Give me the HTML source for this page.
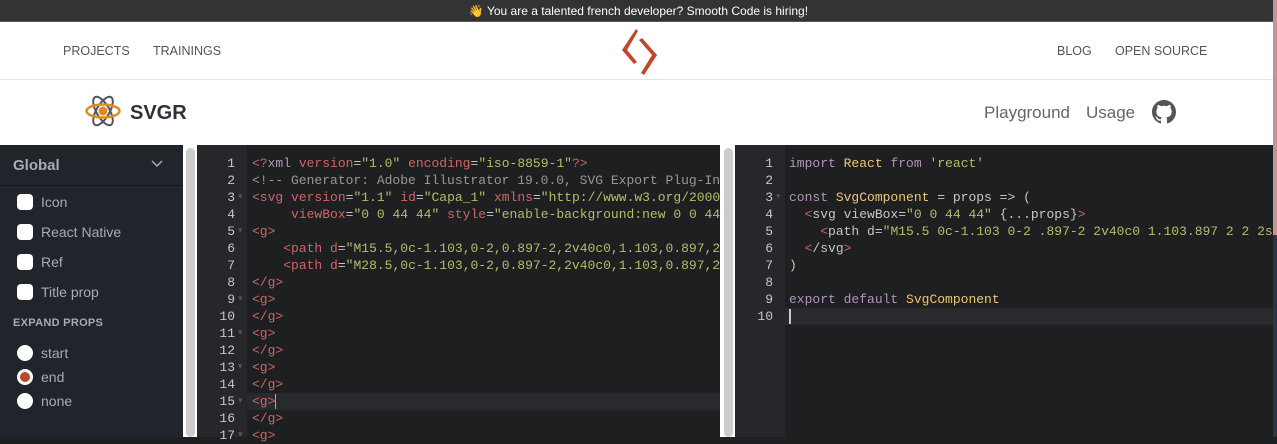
<!DOCTYPE html>
<html><head><meta charset="utf-8"><style>
*{margin:0;padding:0;box-sizing:border-box}
body{width:1277px;height:437px;overflow:hidden;background:#1d1f21;font-family:"Liberation Sans",sans-serif;position:relative}
.abs{position:absolute}
.banner{left:0;top:0;width:1277px;height:22px;background:#333;color:#fff;font-size:12px;line-height:23px;text-align:center;border-bottom:1px solid #555}
.nav{left:0;top:22px;width:1277px;height:58px;background:#fff;border-bottom:1px solid #e2e2e2}
.nav span{position:absolute;top:22px;font-size:12.5px;color:#555}
.hdr{left:0;top:80px;width:1277px;height:65px;background:#fff}
.side{left:0;top:145px;width:183px;height:292px;background:#21242b}
.code{font-family:"Liberation Mono",monospace;font-size:13px;line-height:17px;white-space:pre;color:#c5c8c6}
.ln{color:#c5c8c6;text-align:right}
.t{color:#cc6666}.a{color:#cc6666}.s{color:#b5bd68}.c{color:#969896}.k{color:#b294bb}.y{color:#f0c674}
.cb{position:absolute;left:17px;width:16px;height:16px;border-radius:4px;background:#fff}
.lbl{position:absolute;left:41px;font-size:14px;color:#a8abb0}
.rd{position:absolute;left:17px;width:16px;height:16px;border-radius:50%;background:#fff}
</style></head><body>
<div class="abs banner">👋 You are a talented french developer? Smooth Code is hiring!</div>
<div class="abs nav">
<span style="left:63px">PROJECTS</span><span style="left:153px">TRAININGS</span>
<span style="left:1057px">BLOG</span><span style="left:1115px">OPEN SOURCE</span>
<svg class="abs" style="left:618px;top:5px" width="44" height="50" viewBox="618 27 44 50"><polygon fill="#c0462b" points="636,29 638,31 627,50 637,62 634,64 622,50" /><polygon fill="#c0462b" points="639,40 642,38 657,55 644,75 641,73 652,55"/></svg>
</div>
<div class="abs hdr">
<svg class="abs" style="left:84px;top:14px" width="38" height="34" viewBox="0 0 38 34"><g fill="none" stroke="#555" stroke-width="2"><ellipse cx="19" cy="17" rx="6.5" ry="16" transform="rotate(-30 19 17)"/><ellipse cx="19" cy="17" rx="6.5" ry="16" transform="rotate(30 19 17)"/></g><ellipse cx="19" cy="17" rx="16.5" ry="6.5" fill="none" stroke="#e48a23" stroke-width="2.5"/><circle cx="19" cy="17" r="4.5" fill="#e48a23"/></svg>
<div class="abs" style="left:130px;top:22px;font-size:20px;font-weight:bold;color:#2c323a">SVGR</div>
<div class="abs" style="left:984px;top:23px;font-size:17px;color:#666">Playground</div>
<div class="abs" style="left:1086px;top:23px;font-size:17px;color:#666">Usage</div>
<svg class="abs" style="left:1152px;top:20px" width="24" height="24" viewBox="0 0 16 16"><path fill="#555" d="M8 0C3.58 0 0 3.58 0 8c0 3.540 2.29 6.53 5.47 7.59.4.07.55-.17.55-.38 0-.19-.01-.82-.01-1.49-2.01.37-2.53-.49-2.690-.94-.09-.23-.48-.94-.82-1.13-.28-.15-.68-.52-.01-.53.63-.01 1.08.58 1.23.82.72 1.21 1.870.87 2.33.66.07-.52.28-.87.51-1.07-1.78-.2-3.64-.89-3.64-3.95 0-.87.31-1.59.82-2.15-.08-.2-.36-1.02.08-2.12 0 0 .67-.21 2.2.82.64-.18 1.32-.27 2-.27.68 0 1.36.09 2 .27 1.53-1.04 2.2-.82 2.2-.82.44 1.1.16 1.92.08 2.12.51.56.82 1.27.82 2.15 0 3.07-1.87 3.75-3.65 3.95.29.25.54.73.54 1.48 0 1.07-.01 1.93-.01 2.2 0 .21.15.46.55.38A8.013 8.013 0 0016 8c0-4.42-3.58-8-8-8z"/></svg>
</div>
<div class="abs" style="left:1273px;top:0;width:4px;height:235px;background:#c49393"></div>
<div class="abs" style="left:1273px;top:235px;width:4px;height:202px;background:#2a3545"></div>

<div class="abs side">
<div class="abs" style="left:13px;top:12px;font-size:15px;font-weight:bold;color:#a8abb0">Global</div>
<svg class="abs" style="left:151px;top:15px" width="12" height="8"><path d="M1 1l5 5 5-5" stroke="#a8abb0" stroke-width="1.5" fill="none"/></svg>
<div class="abs" style="left:0;top:40px;width:183px;height:1px;background:#15171b"></div>
<div class="cb" style="top:49px"></div><div class="lbl" style="top:49px">Icon</div>
<div class="cb" style="top:79px"></div><div class="lbl" style="top:79px">React Native</div>
<div class="cb" style="top:109px"></div><div class="lbl" style="top:109px">Ref</div>
<div class="cb" style="top:139px"></div><div class="lbl" style="top:139px">Title prop</div>
<div class="abs" style="left:13px;top:172px;font-size:11px;font-weight:bold;color:#a8abb0;letter-spacing:.3px">EXPAND PROPS</div>
<div class="rd" style="top:200px"></div><div class="lbl" style="top:200px">start</div>
<div class="rd" style="top:224px;background:#c0462b;border:3px solid #fff"></div><div class="lbl" style="top:224px">end</div>
<div class="rd" style="top:248px"></div><div class="lbl" style="top:248px">none</div>
</div>
<div class="abs" style="left:183px;top:145px;width:14px;height:292px;background:#fff"></div>
<div class="abs" style="left:186px;top:148px;width:9px;height:289px;background:#ccc;border-radius:5px"></div>
<div class="abs" style="left:197px;top:145px;width:50px;height:292px;background:#25272b"></div>
<div class="abs" style="left:247px;top:393px;width:473px;height:17px;background:#282a2e"></div>
<div class="abs code ln" style="left:197px;top:155px;width:38px">1
2
3
4
5
6
7
8
9
10
11
12
13
14
15
16
17</div>
<div class="abs code" style="left:238px;top:155px;color:#555;font-size:9px;line-height:17px">

▾

▾



▾

▾

▾

▾

▾</div>
<div class="abs code" style="left:252px;top:155px;width:468px;overflow:hidden"><span class="t">&lt;?</span><span class="k">xml</span> <span class="a">version</span>=<span class="s">"1.0"</span> <span class="a">encoding</span>=<span class="s">"iso-8859-1"</span><span class="t">?&gt;</span>
<span class="c">&lt;!-- Generator: Adobe Illustrator 19.0.0, SVG Export Plug-In . SVG Version</span>
<span class="t">&lt;svg</span> <span class="a">version</span>=<span class="s">"1.1"</span> <span class="a">id</span>=<span class="s">"Capa_1"</span> <span class="a">xmlns</span>=<span class="s">"http://www.w3.org/2000/svg"</span>
     <span class="a">viewBox</span>=<span class="s">"0 0 44 44"</span> <span class="a">style</span>=<span class="s">"enable-background:new 0 0 44 44;"</span>
<span class="t">&lt;g&gt;</span>
    <span class="t">&lt;path</span> <span class="a">d</span>=<span class="s">"M15.5,0c-1.103,0-2,0.897-2,2v40c0,1.103,0.897,2,2,2s2</span>
    <span class="t">&lt;path</span> <span class="a">d</span>=<span class="s">"M28.5,0c-1.103,0-2,0.897-2,2v40c0,1.103,0.897,2,2,2s2</span>
<span class="t">&lt;/g&gt;</span>
<span class="t">&lt;g&gt;</span>
<span class="t">&lt;/g&gt;</span>
<span class="t">&lt;g&gt;</span>
<span class="t">&lt;/g&gt;</span>
<span class="t">&lt;g&gt;</span>
<span class="t">&lt;/g&gt;</span>
<span class="t">&lt;g&gt;</span><span style="border-left:1px solid #aaa"></span>
<span class="t">&lt;/g&gt;</span>
<span class="t">&lt;g&gt;</span></div>
<div class="abs" style="left:720px;top:145px;width:15px;height:292px;background:#fff"></div>
<div class="abs" style="left:724px;top:148px;width:9px;height:289px;background:#ccc;border-radius:5px"></div>
<div class="abs" style="left:735px;top:145px;width:50px;height:292px;background:#25272b"></div>
<div class="abs" style="left:785px;top:308px;width:488px;height:17px;background:#282a2e"></div>
<div class="abs code ln" style="left:735px;top:155px;width:38px">1
2
3
4
5
6
7
8
9
10</div>
<div class="abs code" style="left:776px;top:155px;color:#555;font-size:9px"> 

▾</div>
<div class="abs code" style="left:789px;top:155px;width:484px;overflow:hidden"><span class="k">import</span> <span class="y">React</span> <span class="k">from</span> <span class="s">'react'</span>

<span class="k">const</span> <span class="y">SvgComponent</span> = props =&gt; (
  <span class="t">&lt;</span>svg viewBox=<span class="s">"0 0 44 44"</span> {...props}<span class="t">&gt;</span>
    <span class="t">&lt;</span>path d=<span class="s">"M15.5 0c-1.103 0-2 .897-2 2v40c0 1.103.897 2 2 2s2-.897</span>
  <span class="t">&lt;</span>/svg<span class="t">&gt;</span>
)

<span class="k">export</span> <span class="k">default</span> <span class="y">SvgComponent</span>
<span style="border-left:2px solid #ccc"></span></div>
</body></html>
